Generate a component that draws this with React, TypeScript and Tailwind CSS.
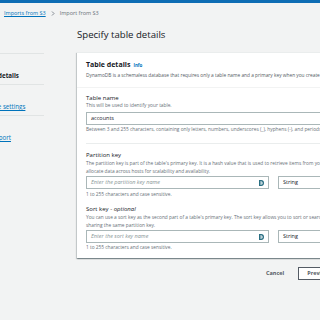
import React from "react";

const FONT = "font-['Open_Sans','Noto_Sans',sans-serif]";

function KeyIcon() {
  return (
    <svg width="5" height="6" viewBox="0 0 5 6" className="shrink-0">
      <path d="M0 0h2.2C4 0 5 1.3 5 3S4 6 2.2 6H0z" fill="#2a6f83" />
      <path d="M1.2 1.4h1c.9 0 1.4.7 1.4 1.6s-.5 1.6-1.4 1.6h-1z" fill="#ffffff" />
      <rect x="1.2" y="2.4" width="1.3" height="1.2" fill="#2a6f83" />
    </svg>
  );
}

function KeyRow({ placeholder }: { placeholder: string }) {
  return (
    <div className="flex gap-[9px]">
      <div className="flex-1 h-[13px] border border-[#aab7b8] bg-white flex items-center pl-[4px] pr-[4px]">
        <span className="flex-1 text-[5.5px] italic text-[#879596] leading-none">{placeholder}</span>
        <KeyIcon />
      </div>
      <div className="w-[100px] h-[13px] border border-[#aab7b8] bg-white flex items-center pl-[4px]">
        <span className="text-[5.5px] text-[#16191f] leading-none">String</span>
      </div>
    </div>
  );
}

function NavItem({ step, label, current }: { step: string; label: string; current?: boolean }) {
  return (
    <div className="h-[31px] border-t border-[#e1e4e4] pt-[8px]">
      <div className="text-[5px] leading-[6px] text-[#687078]">{step}</div>
      <div
        className={`mt-[4px] text-[6.2px] leading-[8px] whitespace-nowrap ${
          current ? "font-bold text-[#16191f]" : "text-[#0073bb] underline"
        }`}
      >
        {label}
      </div>
    </div>
  );
}

export default function App() {
  return (
    <div className={`w-[320px] h-[320px] overflow-hidden bg-[#f2f3f3] ${FONT}`}>
      <div className="h-[3px] bg-[#0e6db4]" />
      <div className="h-[21px] flex items-center pl-[4px] gap-[5px] text-[5.5px]">
        <span className="text-[#0073bb] underline">Imports from S3</span>
        <svg width="4" height="5" viewBox="0 0 4 5">
          <path d="M1 0.5 3 2.5 1 4.5" fill="none" stroke="#687078" strokeWidth="0.8" />
        </svg>
        <span className="text-[#687078]">Import from S3</span>
      </div>
      <div className="flex">
        <div className="w-[44px] shrink-0 overflow-hidden pt-[29px]">
          <div className="ml-[-43px] w-[87px]">
            <NavItem step="Step 2" label="Specify table details" current />
            <NavItem step="Step 3" label="Configure table settings" />
            <NavItem step="Step 4" label="Review and import" />
          </div>
        </div>
        <div className="ml-[33px] w-[310px] shrink-0">
          <h1 className="mt-[4px] mb-[10px] text-[9.6px] leading-[14px] text-[#16191f] whitespace-nowrap">
            Specify table details
          </h1>
          <div className="bg-white shadow-[0_1px_1px_0_rgba(0,28,36,0.3),1px_1px_1px_0_rgba(0,28,36,0.15),-1px_1px_1px_0_rgba(0,28,36,0.15)] border-t border-[#eaeded]">
            <div className="px-[9px] pt-[7px] pb-[8px] border-b border-[#f2f3f3]">
              <div className="flex items-baseline gap-[3px]">
                <span className="text-[7px] leading-[10px] font-bold text-[#16191f]">Table details</span>
                <span className="text-[4.5px] font-bold text-[#0073bb]">Info</span>
              </div>
              <div className="mt-[2px] text-[4.8px] leading-[7px] text-[#545b64] whitespace-nowrap">
                DynamoDB is a schemaless database that requires only a table name and a primary key when you create the table.
              </div>
            </div>
            <div className="px-[9px] pt-[6px] pb-[7px]">
              <div className="text-[6px] leading-[8px] text-[#16191f]">Table name</div>
              <div className="text-[4.8px] leading-[7px] text-[#687078]">This will be used to identify your table.</div>
              <div className="mt-[3px] h-[13px] border border-[#aab7b8] bg-white flex items-center pl-[4px]">
                <span className="text-[5.5px] text-[#16191f] leading-none">accounts</span>
              </div>
              <div className="mt-[1px] text-[4.8px] leading-[7px] text-[#687078] whitespace-nowrap">
                Between 3 and 255 characters, containing only letters, numbers, underscores (_), hyphens (-), and periods (.).
              </div>
              <div className="mt-[10px] border-t border-[#eaeded]" />
              <div className="pt-[7px] text-[6px] leading-[8px] text-[#16191f]">Partition key</div>
              <div className="mt-[1px] text-[4.8px] leading-[7.5px] text-[#687078] whitespace-nowrap">
                The partition key is part of the table's primary key. It is a hash value that is used to retrieve items from your table and
                <br />
                allocate data across hosts for scalability and availability.
              </div>
              <div className="mt-[1px]">
                <KeyRow placeholder="Enter the partition key name" />
              </div>
              <div className="mt-[2px] text-[4.8px] leading-[7px] text-[#687078]">1 to 255 characters and case sensitive.</div>
              <div className="mt-[7px] text-[6px] leading-[8px] text-[#16191f]">
                Sort key - <span className="italic">optional</span>
              </div>
              <div className="mt-[1px] text-[4.8px] leading-[7.5px] text-[#687078] whitespace-nowrap">
                You can use a sort key as the second part of a table's primary key. The sort key allows you to sort or search among all items
                <br />
                sharing the same partition key.
              </div>
              <div className="mt-[1px]">
                <KeyRow placeholder="Enter the sort key name" />
              </div>
              <div className="mt-[1px] text-[4.8px] leading-[7px] text-[#687078]">1 to 255 characters and case sensitive.</div>
            </div>
          </div>
          <div className="mt-[9px] flex justify-end items-center gap-[8px]">
            <span className="px-[6px] text-[5.5px] font-bold text-[#545b64]">Cancel</span>
            <span className="h-[13px] px-[8px] flex items-center border border-[#545b64] bg-white text-[5.5px] font-bold text-[#545b64]">
              Previous
            </span>
            <span className="h-[13px] w-[39px] flex items-center justify-center bg-[#ec7211] text-[5.5px] font-bold text-white">
              Next
            </span>
          </div>
        </div>
      </div>
    </div>
  );
}
